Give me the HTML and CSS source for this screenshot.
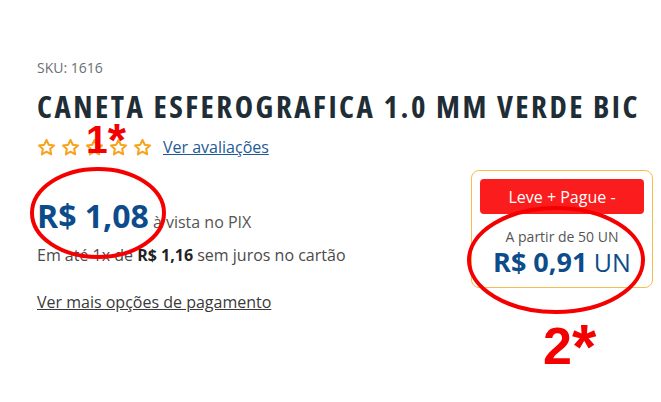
FILE: index.html
```html
<!DOCTYPE html>
<html lang="pt-BR">
<head>
    <meta charset="UTF-8">
    <title>Caneta Esferografica 1.0 mm Verde BIC</title>
    <link rel="stylesheet" href="styles.css">
</head>
<body>
    <div class="product">
        <p class="sku">SKU: 1616</p>
        <h1 class="title">CANETA ESFEROGRAFICA 1.0 MM VERDE BIC</h1>

        <div class="rating">
            <div class="stars">
                <svg viewBox="0 0 24 24"><path d="M12 2.5l2.9 6.1 6.6.8-4.9 4.6 1.3 6.6L12 17.3l-5.9 3.3 1.3-6.6-4.9-4.6 6.6-.8z"/></svg>
                <svg viewBox="0 0 24 24"><path d="M12 2.5l2.9 6.1 6.6.8-4.9 4.6 1.3 6.6L12 17.3l-5.9 3.3 1.3-6.6-4.9-4.6 6.6-.8z"/></svg>
                <svg viewBox="0 0 24 24"><path d="M12 2.5l2.9 6.1 6.6.8-4.9 4.6 1.3 6.6L12 17.3l-5.9 3.3 1.3-6.6-4.9-4.6 6.6-.8z"/></svg>
                <svg viewBox="0 0 24 24"><path d="M12 2.5l2.9 6.1 6.6.8-4.9 4.6 1.3 6.6L12 17.3l-5.9 3.3 1.3-6.6-4.9-4.6 6.6-.8z"/></svg>
                <svg viewBox="0 0 24 24"><path d="M12 2.5l2.9 6.1 6.6.8-4.9 4.6 1.3 6.6L12 17.3l-5.9 3.3 1.3-6.6-4.9-4.6 6.6-.8z"/></svg>
            </div>
            <a class="reviews-link" href="#">Ver avaliações</a>
        </div>

        <div class="buy-row">
            <div class="prices">
                <p class="pix"><span class="price">R$ 1,08</span> à vista no PIX</p>
                <p class="card">Em até 1x de <strong>R$ 1,16</strong> sem juros no cartão</p>
                <a class="more-options" href="#">Ver mais opções de pagamento</a>
            </div>

            <div class="promo">
                <button class="promo-button">Leve + Pague -</button>
                <p class="promo-from">A partir de 50 UN</p>
                <p class="promo-price"><strong>R$ 0,91</strong> UN</p>
            </div>
        </div>
    </div>

    <!-- marcações em vermelho sobre o print -->
    <svg class="marks" viewBox="0 0 661 402">
        <ellipse cx="98" cy="213" rx="66" ry="44"/>
        <ellipse cx="556" cy="260" rx="87" ry="52"/>
        <text x="86" y="153" class="mark-1">1<tspan class="star" dy="3">*</tspan></text>
        <text x="543" y="364" class="mark-2">2<tspan class="star" dy="4">*</tspan></text>
    </svg>
</body>
</html>
```
FILE: styles.css
```css
body {
    margin: 0;
    background: #fff;
    font-family: "Open Sans", Arial, sans-serif;
    color: #444;
}

.product {
    padding: 58px 8px 0 37px;
}

p {
    margin: 0;
}

.sku {
    font-size: 14px;
    line-height: 20px;
    color: #6b6f73;
}

.title {
    margin: 10px 0 0;
    font-size: 31px;
    line-height: 36px;
    font-weight: 700;
    font-stretch: condensed;
    letter-spacing: 2.5px;
    color: #1f2d36;
    white-space: nowrap;
}

/* avaliações */
.rating {
    display: flex;
    align-items: center;
    height: 24px;
    margin-top: 11px;
}

.stars {
    display: flex;
    gap: 5px;
}

.stars svg {
    width: 19px;
    height: 19px;
    fill: none;
    stroke: #f7a51f;
    stroke-width: 2.6;
    stroke-linejoin: round;
}

.reviews-link {
    margin-left: 11px;
    font-size: 16px;
    font-stretch: 90%;
    color: #1d5a96;
    text-decoration: underline;
}

/* preços */
.buy-row {
    display: flex;
    justify-content: space-between;
    align-items: flex-start;
    margin-top: 11px;
}

.prices {
    padding-top: 28px;
}

.pix {
    font-size: 16px;
    line-height: 36px;
    color: #555;
}

.price {
    font-size: 32px;
    font-weight: 700;
    font-stretch: 88%;
    color: #0d4c8a;
}

.card {
    margin-top: 3px;
    font-size: 16px;
    line-height: 24px;
    color: #4a4a4a;
}

.card strong {
    color: #222;
}

.more-options {
    display: inline-block;
    margin-top: 23px;
    font-size: 16px;
    line-height: 24px;
    color: #3a3a3a;
    text-decoration: underline;
}

/* box leve + pague */
.promo {
    width: 164px;
    height: 100px;
    padding: 8px;
    border: 1px solid #f8bc4f;
    border-radius: 8px;
    text-align: center;
}

.promo-button {
    display: block;
    width: 100%;
    height: 35px;
    border: none;
    border-radius: 4px;
    background: #fb1d1d;
    color: #fff;
    font-family: inherit;
    font-size: 16px;
}

.promo-from {
    margin-top: 13px;
    font-size: 14px;
    line-height: 20px;
    color: #555;
}

.promo-price {
    font-size: 25px;
    line-height: 30px;
    font-stretch: 88%;
    color: #0d4c8a;
}

.promo-price strong {
    font-weight: 700;
    font-stretch: 90%;
    font-size: 27px;
}

/* marcações */
.marks {
    position: absolute;
    top: 0;
    left: 0;
    width: 661px;
    height: 402px;
    pointer-events: none;
}

.marks ellipse {
    fill: none;
    stroke: #f50000;
    stroke-width: 4;
}

.marks text {
    font-family: "Liberation Sans", Arial, sans-serif;
    font-weight: 700;
    fill: #f50000;
}

.mark-1 {
    font-size: 39px;
}

.mark-2 {
    font-size: 52px;
}

.marks .star {
    font-size: 1.2em;
}
```
